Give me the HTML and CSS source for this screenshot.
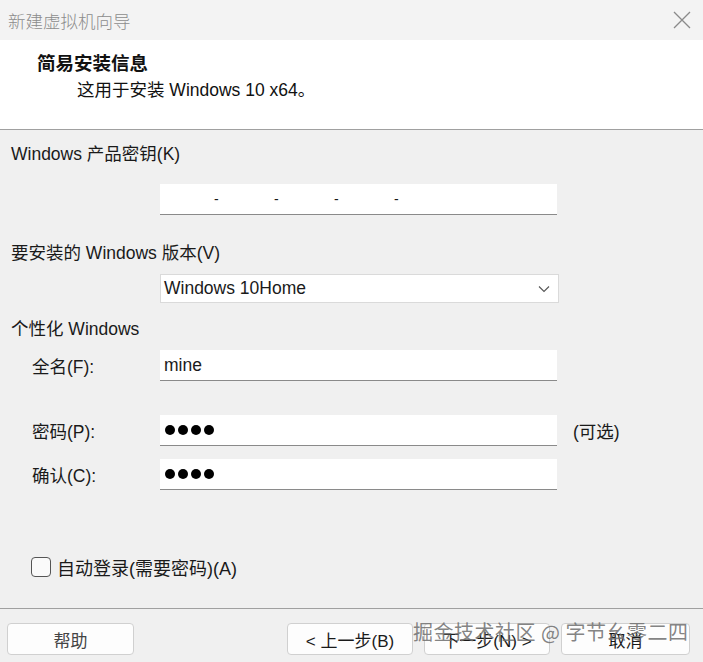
FILE: index.html
```html
<!DOCTYPE html>
<html lang="zh-CN">
<head>
<meta charset="utf-8">
<title>新建虚拟机向导</title>
<link rel="stylesheet" href="styles.css">
</head>
<body>
<div class="window">
  <div class="titlebar">
    <span class="title">新建虚拟机向导</span>
    <svg class="close" width="18" height="18" viewBox="0 0 18 18"><path d="M1 1L17 17M17 1L1 17" stroke="#8a8a8a" stroke-width="1.3" fill="none"/></svg>
  </div>
  <div class="header">
    <div class="h-title">简易安装信息</div>
    <div class="h-sub">这用于安装 Windows 10 x64。</div>
  </div>
  <div class="body">
    <div class="label l-key">Windows 产品密钥(K)</div>
    <div class="field-row">
      <div class="input key">
        <span>-</span><span>-</span><span>-</span><span>-</span>
      </div>
    </div>
    <div class="label l-ver">要安装的 Windows 版本(V)</div>
    <div class="field-row">
      <div class="select">
        <span>Windows 10Home</span>
        <svg width="12" height="8" viewBox="0 0 12 8"><path d="M1 1.5L6 6.5L11 1.5" stroke="#555" stroke-width="1.1" fill="none"/></svg>
      </div>
    </div>
    <div class="label l-pers">个性化 Windows</div>
    <div class="row r-name">
      <span class="rlabel">全名(F):</span>
      <div class="input text">mine</div>
    </div>
    <div class="row r-pass">
      <span class="rlabel">密码(P):</span>
      <div class="input dots"><i></i><i></i><i></i><i></i></div>
      <span class="opt">(可选)</span>
    </div>
    <div class="row r-conf">
      <span class="rlabel">确认(C):</span>
      <div class="input dots"><i></i><i></i><i></i><i></i></div>
    </div>
    <div class="check-row">
      <span class="checkbox"></span>
      <span class="check-label">自动登录(需要密码)(A)</span>
    </div>
  </div>
  <div class="footer">
    <button class="btn help">帮助</button>
    <div class="btn-group">
      <button class="btn">&lt; 上一步(B)</button>
      <button class="btn">下一步(N) &gt;</button>
      <button class="btn">取消</button>
    </div>
    <div class="watermark">掘金技术社区 @ 字节幺零二四</div>
  </div>
</div>
</body>
</html>
```
FILE: styles.css
```css
* { box-sizing: border-box; }
html, body { margin: 0; padding: 0; }
body {
  width: 703px;
  height: 662px;
  overflow: hidden;
  background: #f0f0f0;
  font-family: "Liberation Sans", "Noto Sans CJK SC", sans-serif;
  font-size: 17px;
  color: #1a1a1a;
}
.window { display: flex; flex-direction: column; height: 662px; }
.titlebar {
  height: 40px;
  background: #f3f3f3;
  display: flex;
  align-items: center;
  justify-content: space-between;
  padding: 0 12px 0 8px;
}
.title { color: #8c8c8c; font-size: 17.5px; font-family: "Noto Sans CJK SC", sans-serif; font-weight: 300; }
.header {
  background: #ffffff;
  height: 90px;
  border-bottom: 1px solid #a0a0a0;
  padding: 10px 0 0 37px;
}
.h-title { font-family: "Noto Sans CJK SC", sans-serif; font-weight: 700; font-size: 18.5px; line-height: 24px; color: #111; }
.h-sub { margin: 4px 0 0 40px; font-size: 17.5px; line-height: 24px; color: #111; }
.h-sub, .label, .rlabel, .opt, .check-label, .btn, .input, .select { font-family: "Liberation Sans", "Noto Sans CJK SC", sans-serif; }
.body { flex: 1; padding: 0 11px; display: flex; flex-direction: column; }
.label { font-size: 17.5px; line-height: 22px; color: #1a1a1a; }
.l-key { margin-top: 13px; }
.field-row { padding-left: 149px; }
.input {
  width: 397px;
  height: 31px;
  background: #fff;
  border-bottom: 1px solid #8a8a8a;
  font-size: 17px;
  display: flex;
  align-items: center;
  padding-left: 4px;
  flex: none;
}
.key { margin-top: 19px; padding-left: 54px; gap: 51px; font-size: 14px; }
.key span { width: 9px; }
.l-ver { margin-top: 27px; }
.select {
  margin-top: 10px;
  width: 399px;
  height: 29px;
  background: #fff;
  border: 1px solid #dadada;
  display: flex;
  align-items: center;
  justify-content: space-between;
  padding: 0 8px 0 3px;
  font-size: 17.5px;
}
.l-pers { margin-top: 15px; }
.row { display: flex; align-items: center; }
.rlabel { width: 149px; padding-left: 21px; font-size: 17.5px; flex: none; }
.r-name { margin-top: 10px; }
.r-pass { margin-top: 34px; }
.r-conf { margin-top: 13px; }
.dots { gap: 3px; padding-left: 5px; }
.dots i { width: 10px; height: 10px; border-radius: 50%; background: #000; display: block; }
.text { font-size: 17.5px; }
.opt { margin-left: 16px; font-size: 17.5px; }
.check-row { display: flex; align-items: center; margin-top: 64px; padding-left: 20px; }
.checkbox {
  width: 20px; height: 20px;
  border: 1px solid #555;
  border-radius: 4px;
  background: #fafafa;
}
.check-label { margin-left: 6px; font-size: 18px; }
.footer {
  height: 54px;
  border-top: 1px solid #a0a0a0;
  display: flex;
  align-items: flex-start;
  justify-content: space-between;
  padding: 14px 13px 0 7px;
  position: relative;
}
.btn {
  height: 32px;
  background: #fdfdfd;
  border: 1px solid #d0d0d0;
  border-radius: 4px;
  font-size: 17px;
  color: #1a1a1a;
  padding: 0;
}
.help { width: 127px; color: #444; }
.btn-group { display: flex; gap: 11px; }
.btn-group .btn { width: 126px; }
.btn-group .btn:last-child { width: 129px; }
.watermark {
  position: absolute;
  left: 413px;
  top: 8px;
  font-family: "Noto Sans CJK SC", sans-serif;
  font-size: 20px;
  color: rgba(110,110,110,0.85);
  letter-spacing: 0.5px;
  pointer-events: none;
}
```
